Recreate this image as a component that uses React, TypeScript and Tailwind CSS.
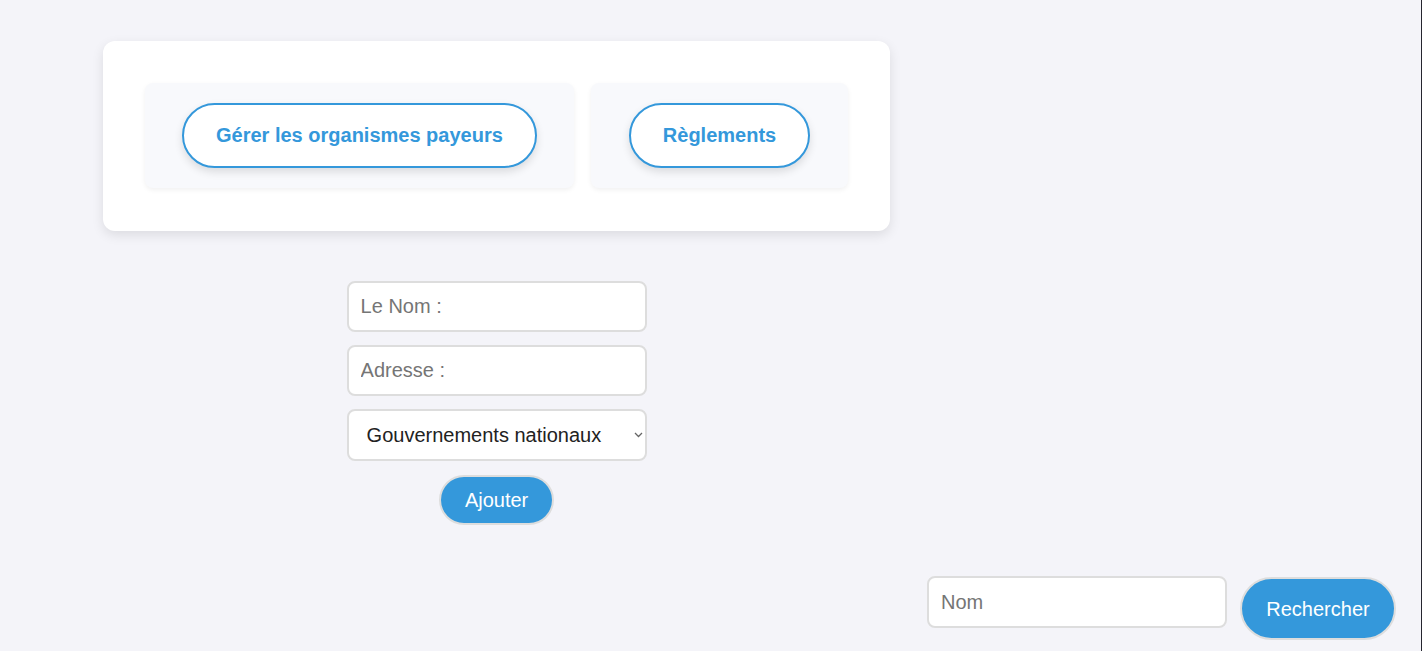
export default function App() {
  return (
    <div className="min-h-screen bg-[#f4f4f9] border-r border-[#25252f] font-['Liberation_Sans',Arial,sans-serif] pb-[10px]">
      <div className="ml-[103px] pt-[41px] w-fit flex flex-col items-center">
        <div className="bg-white rounded-xl px-[42px] pt-[42px] pb-[43px] flex gap-[17px] shadow-[0_4px_12px_rgba(0,0,0,0.1)]">
          <div className="bg-[#f8f9fc] rounded-lg px-[37px] py-5 shadow-[0_2px_5px_rgba(0,0,0,0.06)]">
            <button className="h-[65px] bg-white border-2 border-[#3498db] rounded-full px-8 text-[20px] leading-[23px] font-bold text-[#3498db] shadow-[0_4px_8px_rgba(0,0,0,0.12)]">
              Gérer les organismes payeurs
            </button>
          </div>
          <div className="bg-[#f8f9fc] rounded-lg px-[38px] py-5 shadow-[0_2px_5px_rgba(0,0,0,0.06)]">
            <button className="h-[65px] bg-white border-2 border-[#3498db] rounded-full px-8 text-[20px] leading-[23px] font-bold text-[#3498db] shadow-[0_4px_8px_rgba(0,0,0,0.12)]">
              Règlements
            </button>
          </div>
        </div>

        <form className="mt-[50px] flex flex-col items-center gap-[13px]" onSubmit={(e) => e.preventDefault()}>
          <input
            type="text"
            placeholder="Le Nom :"
            className="w-[300px] h-[51px] bg-white border-2 border-[#dddddd] rounded-lg px-3 text-[20px] text-[#333] placeholder:text-[#757575] outline-none"
          />
          <input
            type="text"
            placeholder="Adresse :"
            className="w-[300px] h-[51px] bg-white border-2 border-[#dddddd] rounded-lg px-3 text-[20px] text-[#333] placeholder:text-[#757575] outline-none"
          />
          <div className="relative">
            <select className="appearance-none w-[300px] h-[52px] bg-white border-2 border-[#dddddd] rounded-lg pl-[18px] pr-8 text-[20px] text-[#222] outline-none">
              <option>Gouvernements nationaux</option>
              <option>Collectivités locales</option>
              <option>Organisations internationales</option>
            </select>
            <svg className="absolute right-[4px] top-[23px] w-[9px] h-[6px] pointer-events-none" viewBox="0 0 9 6" fill="none">
              <path d="M1 1l3.5 3.5L8 1" stroke="#666" strokeWidth="1.3" />
            </svg>
          </div>
          <button className="mt-px w-[115px] h-[50px] bg-[#3498db] border-2 border-[#dddddd] rounded-full text-[20px] text-white">
            Ajouter
          </button>
        </form>
      </div>

      <div className="mt-[51px] flex justify-end items-start gap-[13px] pr-[25px]">
        <input
          type="text"
          placeholder="Nom"
          className="w-[300px] h-[52px] bg-white border-2 border-[#dddddd] rounded-lg px-3 text-[20px] text-[#333] placeholder:text-[#757575] outline-none"
        />
        <button className="mt-px w-[156px] h-[63px] bg-[#3498db] border-2 border-[#dddddd] rounded-full text-[20px] text-white">
          Rechercher
        </button>
      </div>
    </div>
  )
}
